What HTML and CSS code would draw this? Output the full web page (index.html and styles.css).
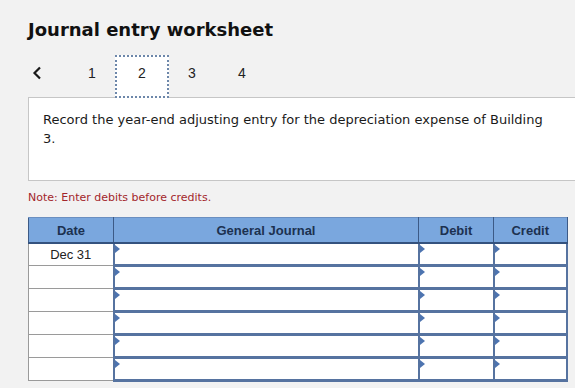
FILE: index.html
```html
<!DOCTYPE html>
<html lang="en">
  <head>
    <meta charset="UTF-8" />
    <title>Journal entry worksheet</title>
    <link rel="stylesheet" href="styles.css">
  </head>
  <body>
    <div class="page">
      <h1>Journal entry worksheet</h1>

      <div class="steps">
        <span class="prev">
          <svg width="10" height="14" viewBox="0 0 10 14">
            <path d="M8 1.5 L2.5 7 L8 12.5" fill="none" stroke="#1a1a1a" stroke-width="2.2" />
          </svg>
        </span>
        <span class="step">1</span>
        <span class="step active">2</span>
        <span class="step">3</span>
        <span class="step">4</span>
      </div>

      <div class="question">
        Record the year-end adjusting entry for the depreciation expense of Building 3.
      </div>

      <p class="note">Note: Enter debits before credits.</p>

      <table class="journal">
        <thead>
          <tr>
            <th class="col-date">Date</th>
            <th class="col-account">General Journal</th>
            <th class="col-debit">Debit</th>
            <th class="col-credit">Credit</th>
          </tr>
        </thead>
        <tbody>
          <tr>
            <td class="date">Dec 31</td>
            <td class="field"></td>
            <td class="field"></td>
            <td class="field"></td>
          </tr>
          <tr>
            <td class="date"></td>
            <td class="field"></td>
            <td class="field"></td>
            <td class="field"></td>
          </tr>
          <tr>
            <td class="date"></td>
            <td class="field"></td>
            <td class="field"></td>
            <td class="field"></td>
          </tr>
          <tr>
            <td class="date"></td>
            <td class="field"></td>
            <td class="field"></td>
            <td class="field"></td>
          </tr>
          <tr>
            <td class="date"></td>
            <td class="field"></td>
            <td class="field"></td>
            <td class="field"></td>
          </tr>
          <tr>
            <td class="date"></td>
            <td class="field"></td>
            <td class="field"></td>
            <td class="field"></td>
          </tr>
        </tbody>
      </table>
    </div>
  </body>
</html>
```

FILE: styles.css
```css
body {
  margin: 0;
  background-color: #f2f2f2;
  font-family: "DejaVu Sans", Verdana, sans-serif;
  color: #111;
  overflow: hidden;
}

.page {
  padding: 18px 0 0 28px;
}

h1 {
  margin: 0;
  font-size: 18px;
  font-weight: bold;
  line-height: 24px;
  color: #111;
}

.steps {
  display: flex;
  align-items: center;
  height: 43px;
  margin-top: 13px;
  font-family: "Liberation Sans", Arial, sans-serif;
  font-size: 14px;
  color: #222;
  position: relative;
  z-index: 1;
}

.prev {
  width: 35px;
  padding-left: 4px;
  display: flex;
  align-items: center;
  margin-top: -8px;
}

.step {
  width: 50px;
  height: 43px;
  display: flex;
  justify-content: center;
  align-items: center;
  box-sizing: border-box;
  padding-bottom: 8px;
}

.step.active {
  width: 54px;
  margin: 0 -2px;
  background-color: #fff;
  border: 2px dotted #6d87aa;
}

.question {
  margin-top: -1px;
  height: 84px;
  box-sizing: border-box;
  padding: 12px 30px 0 14px;
  background-color: #fff;
  border: 1px solid #c6c6c6;
  border-right: none;
  font-size: 13px;
  line-height: 19px;
  color: #1a1a1a;
}

.note {
  margin: 10px 0 0;
  font-size: 11px;
  line-height: 14px;
  color: #a3262b;
}

.journal {
  margin-top: 12px;
  width: 540px;
  border-collapse: collapse;
  font-family: "Liberation Sans", Arial, sans-serif;
  font-size: 13px;
}

.journal th {
  height: 24px;
  padding: 0;
  background-color: #7aa7de;
  color: #1c3150;
  font-weight: bold;
  border: 1px solid #3c5a86;
  border-top-color: #6b8fc0;
  border-bottom: 2px solid #34527e;
}

.col-date {
  width: 84px;
}

.col-account {
  width: 304px;
}

.col-debit {
  width: 74px;
}

.journal td {
  height: 20px;
  padding: 0;
  background-color: #fff;
}

.journal td.date {
  text-align: center;
  color: #222;
  border: 1px solid #9a9a9a;
  border-right: none;
}

.journal td.field {
  position: relative;
  border: 2px solid #5673a0;
  border-bottom-width: 3px;
  border-top-width: 1px;
}

/* little marker at the top-left corner of each entry field */
.journal td.field::before {
  content: "";
  position: absolute;
  top: 1px;
  left: 0;
  border-top: 4px solid transparent;
  border-bottom: 4px solid transparent;
  border-left: 5px solid #4d74b0;
}
```
